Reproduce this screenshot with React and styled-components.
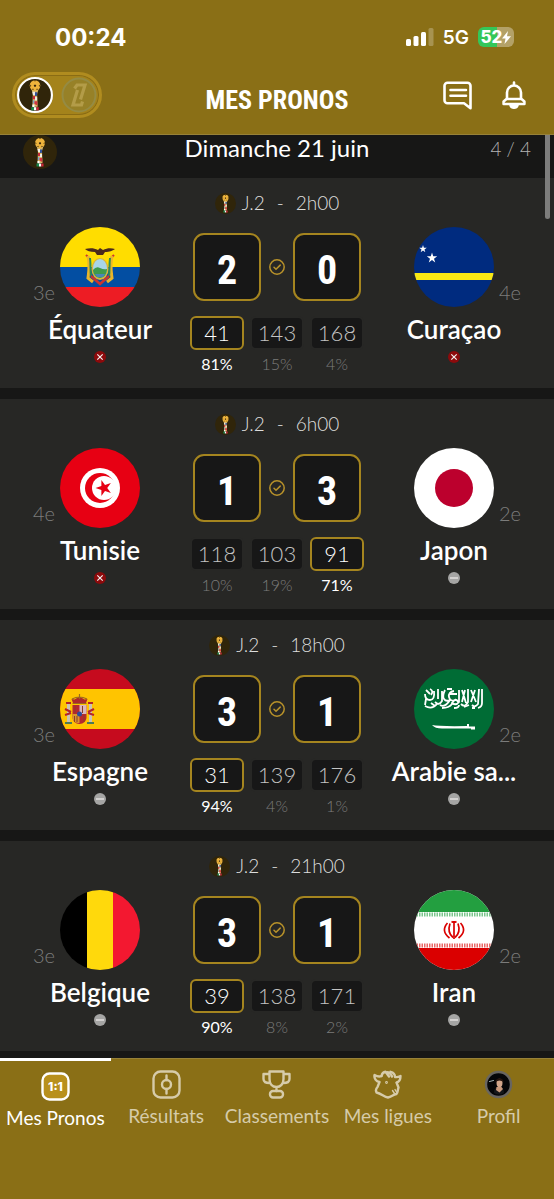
import React, { useState } from "react";
import styled, { createGlobalStyle } from "styled-components";

const GlobalStyle = createGlobalStyle`
  * {
    box-sizing: border-box;
  }

  body {
    margin: 0;
    background: #171716;
    color: white;
    font-family: Lato, "Open Sans", sans-serif;
  }

  button,
  input {
    font-family: inherit;
    margin: 0;
    padding: 0;
  }
`;

const gold = "#8a6f16";
const condensed = `"Liberation Sans Narrow", "Roboto Condensed", "Open Sans Condensed", "DejaVu Sans Condensed", sans-serif`;

const matches = [
  {
    time: "2h00",
    home: { name: "Équateur", rank: "3e", flag: "ecuador", out: true },
    away: { name: "Curaçao", rank: "4e", flag: "curacao", out: true },
    score: [2, 0],
    odds: [[41, "81%"], [143, "15%"], [168, "4%"]],
    picked: 0
  },
  {
    time: "6h00",
    home: { name: "Tunisie", rank: "4e", flag: "tunisia", out: true },
    away: { name: "Japon", rank: "2e", flag: "japan" },
    score: [1, 3],
    odds: [[118, "10%"], [103, "19%"], [91, "71%"]],
    picked: 2
  },
  {
    time: "18h00",
    home: { name: "Espagne", rank: "3e", flag: "spain" },
    away: { name: "Arabie sa...", rank: "2e", flag: "saudi" },
    score: [3, 1],
    odds: [[31, "94%"], [139, "4%"], [176, "1%"]],
    picked: 0
  },
  {
    time: "21h00",
    home: { name: "Belgique", rank: "3e", flag: "belgium" },
    away: { name: "Iran", rank: "2e", flag: "iran" },
    score: [3, 1],
    odds: [[39, "90%"], [138, "8%"], [171, "2%"]],
    picked: 0
  }
];

// * Page
const Page = styled.div`
  display: flex;
  flex-direction: column;
  min-height: 100vh;
`;

// * Header
const Header = styled.header`
  background: ${gold};
  border-bottom: 1px solid #978138;
`;

const StatusBar = styled.div`
  display: flex;
  align-items: center;
  justify-content: space-between;
  height: 72px;
  padding: 2px 40px 0 55px;
  font-family: Inter, sans-serif;
`;

const Clock = styled.span`
  font-size: 24px;
  font-weight: 700;
`;

const StatusIcons = styled.div`
  display: flex;
  align-items: center;
  gap: 9px;
`;

const Network = styled.span`
  font-size: 19px;
  font-weight: 600;
`;

const Battery = styled.span`
  display: flex;
  align-items: center;
  justify-content: center;
  width: 36px;
  height: 20px;
  border-radius: 6px;
  background: linear-gradient(90deg, #34c759 52%, #b3a167 52%);
  font-size: 17px;
  font-weight: 800;
`;

const TitleBar = styled.div`
  display: grid;
  grid-template-columns: 1fr auto 1fr;
  align-items: center;
  height: 62px;
  padding: 0 12px 16px;
`;

const Title = styled.h1`
  margin: 10px 0 0;
  font-family: ${condensed};
  font-size: 26px;
  line-height: 34px;
  font-weight: 700;
`;

const Switch = styled.button`
  display: flex;
  align-items: center;
  justify-content: space-between;
  width: 90px;
  height: 46px;
  padding: 0 2px;
  border: 3px solid #b08c1f;
  border-radius: 23px;
  background: #a4831b;
  box-shadow: inset 0 0 0 1px #8a6c14;
  cursor: pointer;
`;

const Actions = styled.div`
  display: flex;
  justify-content: flex-end;
  gap: 30px;
  padding-right: 16px;
`;

const IconButton = styled.button`
  display: flex;
  border: none;
  background: none;
  color: white;
  cursor: pointer;
`;

// * Match list
const List = styled.main`
  position: relative;
  flex: 1;
`;

const ScrollThumb = styled.div`
  position: absolute;
  top: 0;
  right: 4px;
  width: 5px;
  height: 84px;
  border-radius: 0 0 3px 3px;
  background: #7d7d7c;
`;

const DateBar = styled.div`
  display: grid;
  grid-template-columns: 1fr auto 1fr;
  align-items: start;
  height: 43px;
  padding: 0 23px;
`;

const DateTitle = styled.h2`
  margin: 0;
  font-size: 24px;
  line-height: 26px;
  font-weight: 400;
`;

const Counter = styled.span`
  justify-self: end;
  color: #b4b4b3;
  font-size: 19px;
  font-weight: 300;
  line-height: 28px;
`;

const Card = styled.article`
  height: 210px;
  margin-bottom: 11px;
  padding: 15px 10px 0;
  background: #272725;

  &:last-of-type {
    margin-bottom: 7px;
  }
`;

const Meta = styled.div`
  display: flex;
  align-items: center;
  justify-content: center;
  gap: 12px;
  height: 20px;
  margin-bottom: 14px;
  color: #dededd;
  font-size: 19px;
  font-weight: 300;
  line-height: 20px;
`;

const Round = styled.span`
  display: flex;
  align-items: center;
  gap: 6px;
`;

const Versus = styled.div`
  display: grid;
  grid-template-columns: 1fr 174px 1fr;
`;

const TeamBox = styled.div`
  display: flex;
  flex-direction: column;
  align-items: center;
`;

const FlagRow = styled.div`
  display: grid;
  grid-template-columns: 1fr 80px 1fr;
  align-self: stretch;
  align-items: end;
  gap: 5px;
`;

const Rank = styled.span`
  grid-column: ${props => (props.$away ? 3 : 1)};
  grid-row: 1;
  text-align: ${props => (props.$away ? "left" : "right")};
  color: #7c7c7b;
  font-size: 20px;
  font-weight: 300;
  line-height: 30px;
`;

const FlagCircle = styled.svg`
  grid-column: 2;
  grid-row: 1;
  width: 80px;
  height: 80px;
  border-radius: 50%;
`;

const TeamName = styled.h3`
  margin: 7px 0;
  font-size: 26px;
  line-height: 30px;
  font-weight: 600;
  white-space: nowrap;
`;

const Forecast = styled.div`
  display: flex;
  flex-direction: column;
  margin-top: 6px;
`;

const Scores = styled.div`
  display: flex;
  align-items: center;
  justify-content: center;
  gap: 8px;
`;

const ScoreInput = styled.input`
  width: 68px;
  height: 68px;
  padding-top: 6px;
  border: 2px solid #a5851f;
  border-radius: 11px;
  background: #171717;
  color: white;
  font-family: ${condensed};
  font-size: 40px;
  font-weight: 700;
  text-align: center;
`;

const Odds = styled.div`
  display: grid;
  grid-template-columns: repeat(3, 54px);
  gap: 6px;
  margin-top: 15px;
`;

const Odd = styled.div`
  display: flex;
  flex-direction: column;
  align-items: center;
  gap: 5px;
  color: ${props => (props.$picked ? "white" : "#7c7c7b")};
  font-size: 16px;
  font-weight: ${props => (props.$picked ? 400 : 300)};
  line-height: 18px;
`;

const OddButton = styled.button`
  width: 54px;
  height: 34px;
  border: 2px solid ${props => (props.$picked ? "#a5851f" : "#272725")};
  border-radius: 6px;
  background: #171717;
  color: ${props => (props.$picked ? "white" : "#c4c4c3")};
  font-size: 22px;
  font-weight: 300;
  line-height: 28px;
  cursor: pointer;
`;

// * Bottom navigation
const Nav = styled.nav`
  display: grid;
  grid-template-columns: repeat(5, 1fr);
  min-height: 141px;
  background: ${gold};
`;

const NavLink = styled.a`
  display: flex;
  flex-direction: column;
  align-items: center;
  gap: 5px;
  padding-top: 11px;
  border-top: ${props => (props.$active ? "3px solid white" : "1px solid #978138")};
  color: ${props => (props.$active ? "white" : "#d6cba9")};
  font-size: 19px;
  line-height: 24px;
  text-decoration: none;
  white-space: nowrap;
`;

function Trophy({ size, ring }) {
  return (
    <svg width={size} height={size} viewBox="0 0 34 34" aria-hidden="true">
      <circle cx="17" cy="17" r={ring ? 16 : 17} fill="#30250a" stroke={ring || "none"} strokeWidth="2" />
      <path d="M13.500 11h7l-1.500 5 .5 12h-5L15 16z" fill="#d9b869" />
      <circle cx="17" cy="8" r="5" fill="#eeb43c" />
      <path d="M17 7l1.200.9-.5 1.400h-1.400l-.5-1.400zM15.800 3.300h2.400L17 4.300zM12.300 7l1.200 1.200-.8 1.300zM21.700 7l-1.200 1.200.8 1.300zM14 11.500l1.200-.7.6 1.500zM20 11.500l-1.200-.7-.6 1.500z" fill="#35250c" />
      <path d="M14.500 14h2.500v3h-2z" fill="#f1eee6" />
      <path d="M17 14.500h2.200l-.4 3.500H17z" fill="#31519c" />
      <path d="M15 18h2v3h-2z" fill="#c7283a" />
      <path d="M17 19h2v3h-2z" fill="#f1eee6" />
      <path d="M15 22h1.500v3H15z" fill="#7da9c9" />
      <path d="M16.500 23h2.700v4l-2.700-1.500z" fill="#d43341" />
      <path d="M14.500 26h2v2.500h-2z" fill="#fff" />
      <path d="M13.500 28.500H16v3h-2.500z" fill="#16894a" />
      <path d="M16 28.500h2.300v3H16z" fill="#fff" />
      <path d="M18.300 28.500h2.200v3h-2.200z" fill="#d02537" />
    </svg>
  );
}

function LeagueLogo() {
  return (
    <svg width="36" height="36" viewBox="0 0 36 36" fill="none" aria-hidden="true">
      <circle cx="18" cy="18" r="16.500" fill="#978127" stroke="#958b43" strokeWidth="2" />
      <path d="M16.500 13L12 28h8.500l1-3.500M13.500 11.500L16 8h8l-4.500 14.500" stroke="#b39c48" strokeWidth="3.200" />
    </svg>
  );
}

function Signal() {
  return (
    <svg width="28" height="18" viewBox="0 0 28 18" fill="white" aria-hidden="true">
      <rect x="0" y="11" width="5" height="7" rx="1.500" />
      <rect x="7.500" y="8" width="5" height="10" rx="1.500" />
      <rect x="15" y="4" width="5" height="14" rx="1.500" />
      <rect x="22.500" y="0" width="5" height="18" rx="1.500" opacity=".25" />
    </svg>
  );
}

function ChatIcon() {
  return (
    <svg width="29" height="29" viewBox="0 0 29 29" fill="none" stroke="currentColor" strokeWidth="2.600" strokeLinecap="round" strokeLinejoin="round">
      <path d="M4.500 1.800h20a3 3 0 0 1 3 3v22.400L21 22.300H4.500a3 3 0 0 1-3-3V4.800a3 3 0 0 1 3-3zM7.500 9h15.500M7.500 14.700h15.500" />
    </svg>
  );
}

function BellIcon() {
  return (
    <svg width="24" height="29" viewBox="0 0 24 29" fill="none" stroke="currentColor" strokeWidth="2.600" strokeLinecap="round" strokeLinejoin="round">
      <path d="M12 1.500V4M5 18v-6.500a7 7 0 0 1 14 0V18M4.500 18h15l2.900 2.500v2.500H1.600v-2.500z" />
      <path d="M8 24.500a4.200 4 0 0 0 8 0z" fill="currentColor" strokeWidth="1.500" />
    </svg>
  );
}

function CheckIcon() {
  return (
    <svg width="16" height="16" viewBox="0 0 16 16" fill="none" stroke="#b8922a" strokeWidth="1.500" strokeLinecap="round" aria-hidden="true">
      <circle cx="8" cy="8" r="7.200" />
      <path d="M5 8.300l2 2 4.200-4.200" />
    </svg>
  );
}

function TeamStatus({ out }) {
  return (
    <svg width="12" height="12" viewBox="0 0 12 12" aria-hidden="true">
      <circle cx="6" cy="6" r="6" fill={out ? "#8c0a0c" : "#a5a5a4"} />
      <path
        d={out ? "M3.300 3.300l5.400 5.400M8.700 3.300l-5.400 5.400" : "M2 6h8"}
        stroke="#f2eeee"
        strokeWidth="1.200"
      />
    </svg>
  );
}

const star = "M0-1L.225-.309.951-.309.363.118.588.809 0 .382-.588.809-.363.118-.951-.309-.225-.309z";

const flags = {
  ecuador: (
    <>
      <path d="M0 0h80v40H0z" fill="#ffdd00" />
      <path d="M0 40h80v20H0z" fill="#034ea2" />
      <path d="M0 60h80v20H0z" fill="#ed1c24" />
      <path d="M29 31l-3-3M51 31l3-3" stroke="#c33" strokeWidth="2" />
      <path d="M28 29c2 10 1 14 0 22l5 4M52 29c-2 10-1 14 0 22l-5 4" fill="none" stroke="#e9b52b" strokeWidth="3" />
      <path d="M30 31c1 8 0 12 1 18M50 31c-1 8 0 12-1 18" fill="none" stroke="#2f8a52" strokeWidth="2" />
      <path d="M31 49l9 8 9-8" fill="none" stroke="#c9352f" strokeWidth="2.500" />
      <ellipse cx="40" cy="42" rx="8.500" ry="11" fill="#d9b43a" />
      <ellipse cx="40" cy="41.500" rx="7" ry="9.500" fill="#a8d5e8" />
      <path d="M33 43q3-4 7-2t7 1c0 5-3 9-7 9s-7-4-7-8z" fill="#3f9a4c" />
      <path d="M35 47h10l-2 3h-6z" fill="#4a87b5" />
      <path d="M25 22c5-1 9-1 13 1l2-2 3 2c4-2 8-2 12-1-3 2-5 3-10 3l-2 3h-6l-2-3c-5 0-8-1-10-3z" fill="#4b2a1c" />
    </>
  ),
  curacao: (
    <>
      <path d="M0 0h80v80H0z" fill="#002b7f" />
      <path d="M0 46h80v7H0z" fill="#f9e814" />
      <path d={star} fill="#fff" transform="translate(9 22) scale(4)" />
      <path d={star} fill="#fff" transform="translate(18 31) scale(5.500)" />
    </>
  ),
  tunisia: (
    <>
      <path d="M0 0h80v80H0z" fill="#e70013" />
      <circle cx="40" cy="40" r="20" fill="#fff" />
      <circle cx="40" cy="40" r="15" fill="#e70013" />
      <circle cx="44" cy="40" r="12" fill="#fff" />
      <path d={star} fill="#e70013" transform="translate(44 40) rotate(-90) scale(8.500)" />
    </>
  ),
  japan: (
    <>
      <path d="M0 0h80v80H0z" fill="#fff" />
      <circle cx="40" cy="40" r="19" fill="#bc002d" />
    </>
  ),
  spain: (
    <>
      <path d="M0 0h80v80H0z" fill="#c60b1e" />
      <path d="M0 20h80v40H0z" fill="#ffc400" />
      <path d="M7 35h3v18H7zM29 35h3v18h-3z" fill="#c9c3b4" />
      <path d="M5 40l6 3M5 46l6-2M34 40l-6 3M34 46l-6-2M6 34h5M28 34h5" stroke="#b3242c" strokeWidth="2" />
      <path d="M5 54h7M27 54h7" stroke="#4d7a55" strokeWidth="2" />
      <path d="M12.500 36h14v12c0 4-3 7-7 7s-7-3-7-7z" fill="#b5282f" />
      <path d="M19.500 36h7v9h-7z" fill="#d9b8bd" />
      <path d="M12.500 45h7v9c-4 0-7-2-7-5z" fill="#d9972b" />
      <path d="M15 37v7M22.500 37v7M14.500 47v6M17 47v6M24 46v7" stroke="#8a3d2a" strokeWidth="1" />
      <circle cx="19.500" cy="45" r="2.500" fill="#2c4b9d" />
      <path d="M13 34l-1.500-4 3 .5 5-3 5 3 3-.5-1.500 4z" fill="#ad2a2a" />
      <path d="M12.500 34.500h14M12 30q4-2 7.500-2t7.500 2M19.500 25v5" stroke="#9b6a1f" fill="none" strokeWidth="1.200" />
    </>
  ),
  saudi: (
    <>
      <path d="M0 0h80v80H0z" fill="#006c35" />
      <g fill="none" stroke="#fff" strokeWidth="1.800">
        <path d="M68 20v14q0 4-4 5M65 20l-1 15q-3 4-6 1M61 21l-4 12M57 21l5 12M54 20v13q-3 6-7 2M51 21l-3 12M48 21l4 13" />
        <path d="M45 21v12q-3 4-7 1 4-6 6-1M40 22q-6 1-5 6t7 3M36 31q-5 8-10 5M31 21q-3 6-1 9t6 1M28 22v10q-3 5-7 1M24 20v10M20 22q1 9-4 9t-5-6M12 21l4 4M11 37q7 4 12-2M12 30l-1 6M28 39q7 0 10-4M16 20q4 2 1 6M40 39q5 0 5-3" />
        <path d="M50 38l5-2M33 20h5M58 39h3M17 34l4 3M35 25h8" />
      </g>
      <path d="M18 56q7 1.500 35 1V55h2v2.500h6v3h-4v-1H28q-7 0-10-3.500z" fill="#fff" />
    </>
  ),
  belgium: (
    <>
      <path d="M0 0h27v80H0z" fill="#000" />
      <path d="M27 0h26v80H27z" fill="#ffd90c" />
      <path d="M53 0h27v80H53z" fill="#f31830" />
    </>
  ),
  iran: (
    <>
      <path d="M0 0h80v80H0z" fill="#fff" />
      <path d="M0 0h80v22H0z" fill="#239f40" />
      <path d="M0 58h80v22H0z" fill="#da0000" />
      <path d="M0 24.500h80" stroke="#239f40" strokeWidth="4" strokeDasharray="1.500 1" opacity=".6" />
      <path d="M0 55.500h80" stroke="#da0000" strokeWidth="4" strokeDasharray="1.500 1" opacity=".6" />
      <g fill="none" stroke="#da0000" strokeWidth="1.700">
        <path d="M40 31v18M37.500 31.500q2.500 1.500 5 0" />
        <path d="M36 33.500q-3 9 3 14M44 33.500q3 9-3 14M33.500 33q-7 8 2 15M46.500 33q7 8-2 15" />
      </g>
    </>
  )
};

function Team({ team, away }) {
  return (
    <TeamBox>
      <FlagRow>
        <Rank $away={away}>{team.rank}</Rank>
        <FlagCircle viewBox="0 0 80 80" aria-hidden="true">
          {flags[team.flag]}
        </FlagCircle>
      </FlagRow>
      <TeamName>{team.name}</TeamName>
      <TeamStatus out={team.out} />
    </TeamBox>
  );
}

function Match({ match }) {
  const [score, setScore] = useState(match.score);
  const [picked, setPicked] = useState(match.picked);

  const changeScore = (index, value) =>
    setScore(score.map((s, i) => (i === index ? value : s)));

  return (
    <Card>
      <Meta>
        <Round>
          <Trophy size={21} />
          J.2
        </Round>
        <span>-</span>
        <span>{match.time}</span>
      </Meta>
      <Versus>
        <Team team={match.home} />
        <Forecast>
          <Scores>
            <ScoreInput
              aria-label={match.home.name}
              inputMode="numeric"
              value={score[0]}
              onChange={e => changeScore(0, e.target.value)}
            />
            <CheckIcon />
            <ScoreInput
              aria-label={match.away.name}
              inputMode="numeric"
              value={score[1]}
              onChange={e => changeScore(1, e.target.value)}
            />
          </Scores>
          <Odds>
            {match.odds.map(([points, share], i) => (
              <Odd key={i} $picked={i === picked}>
                <OddButton $picked={i === picked} onClick={() => setPicked(i)}>
                  {points}
                </OddButton>
                {share}
              </Odd>
            ))}
          </Odds>
        </Forecast>
        <Team team={match.away} away />
      </Versus>
    </Card>
  );
}

const navIcons = {
  pronos: (
    <>
      <rect x="1.500" y="1.500" width="26" height="26" rx="7" fill="#b8901c" />
      <text x="14.500" y="19" textAnchor="middle" fontFamily="Inter, sans-serif" fontSize="12" fontWeight="800" fill="currentColor" stroke="none">
        1:1
      </text>
    </>
  ),
  results: (
    <>
      <rect x="1.500" y="1.500" width="26" height="26" rx="7" />
      <circle cx="14.500" cy="14.500" r="4.500" />
      <path d="M14.500 5.500V10M14.500 19v4.500" />
    </>
  ),
  ranking: (
    <>
      <path d="M7.500 1.500h14V9c0 5-3 8-7 8s-7-3-7-8zM7.500 4h-6v5c0 3 2 4 6 4M21.500 4h6v5c0 3-2 4-6 4M14.500 17v4" />
      <rect x="8" y="21" width="13" height="6.500" rx="3" />
    </>
  ),
  leagues: (
    <>
      <path d="M8.500 6C6.500 7 4 6.500 1.500 5 1 8.500 3 11.500 6.500 12L4.500 17C3 18.500 2.500 20.500 3.500 22.500 8.500 23.500 11 27 15 27.500 18.500 27 20 24.500 23.500 24 25 22.500 24.500 20 25.500 17.500L23.500 12.500C26 12 27.500 9.500 27.500 6 25.500 7 24 7.500 22 7 22 4.500 20.500 2.500 17.500 1.800" />
      <path d="M8.500 6C9 3.500 10.500 2 12.500 1.800L16 6.500M13 2.500C15.500 1.500 18 3.500 19 6.500" />
      <path d="M19.500 20.500l2 3M22 19.500l1.500 2.500" strokeWidth="1.400" />
      <circle cx="13.500" cy="12.500" r=".5" strokeWidth="1.800" />
    </>
  ),
  profile: (
    <>
      <circle cx="14.500" cy="14.500" r="12.500" fill="#050608" stroke="#686560" />
      <path d="M10 23c0-5 2-6 5-6s5 2 5 6q-5 3-10 0z" fill="#15171a" stroke="none" />
      <path d="M12.500 17h5l1.500 2-3.500 3.500L12 20z" fill="#c8997c" stroke="none" />
      <ellipse cx="15.500" cy="13" rx="3" ry="4.200" fill="#d2a68b" stroke="none" />
      <path d="M11.500 12c0-5 8-5 8 0q-4-3-8 0z" fill="#25150f" stroke="none" />
      <path d="M5.500 11.500l4-1" stroke="#a5b3b5" strokeWidth="1" />
    </>
  )
};

const navItems = [
  ["pronos", "Mes Pronos"],
  ["results", "Résultats"],
  ["ranking", "Classements"],
  ["leagues", "Mes ligues"],
  ["profile", "Profil"]
];

export default function App() {
  const [worldCup, setWorldCup] = useState(true);

  return (
    <Page>
      <GlobalStyle />
      <Header>
        <StatusBar>
          <Clock>00:24</Clock>
          <StatusIcons>
            <Signal />
            <Network>5G</Network>
            <Battery>
              52
              <svg width="9" height="13" viewBox="0 0 9 13" fill="white" aria-hidden="true">
                <path d="M6 0L0 7.500h3.500L2.500 13 9 5.300H5z" />
              </svg>
            </Battery>
          </StatusIcons>
        </StatusBar>
        <TitleBar>
          <Switch
            role="switch"
            aria-label="Compétition"
            aria-checked={worldCup}
            onClick={() => setWorldCup(!worldCup)}
          >
            <Trophy size={36} ring="white" />
            <LeagueLogo />
          </Switch>
          <Title>MES PRONOS</Title>
          <Actions>
            <IconButton aria-label="Messages">
              <ChatIcon />
            </IconButton>
            <IconButton aria-label="Notifications">
              <BellIcon />
            </IconButton>
          </Actions>
        </TitleBar>
      </Header>
      <List>
        <DateBar>
          <Trophy size={34} />
          <DateTitle>Dimanche 21 juin</DateTitle>
          <Counter>4 / 4</Counter>
        </DateBar>
        {matches.map(match => (
          <Match key={match.time} match={match} />
        ))}
        <ScrollThumb />
      </List>
      <Nav>
        {navItems.map(([icon, label], i) => (
          <NavLink key={icon} href={`#${icon}`} $active={i === 0}>
            <svg width="29" height="29" viewBox="0 0 29 29" fill="none" stroke="currentColor" strokeWidth="2.400" strokeLinecap="round" strokeLinejoin="round" aria-hidden="true">
              {navIcons[icon]}
            </svg>
            {label}
          </NavLink>
        ))}
      </Nav>
    </Page>
  );
}
